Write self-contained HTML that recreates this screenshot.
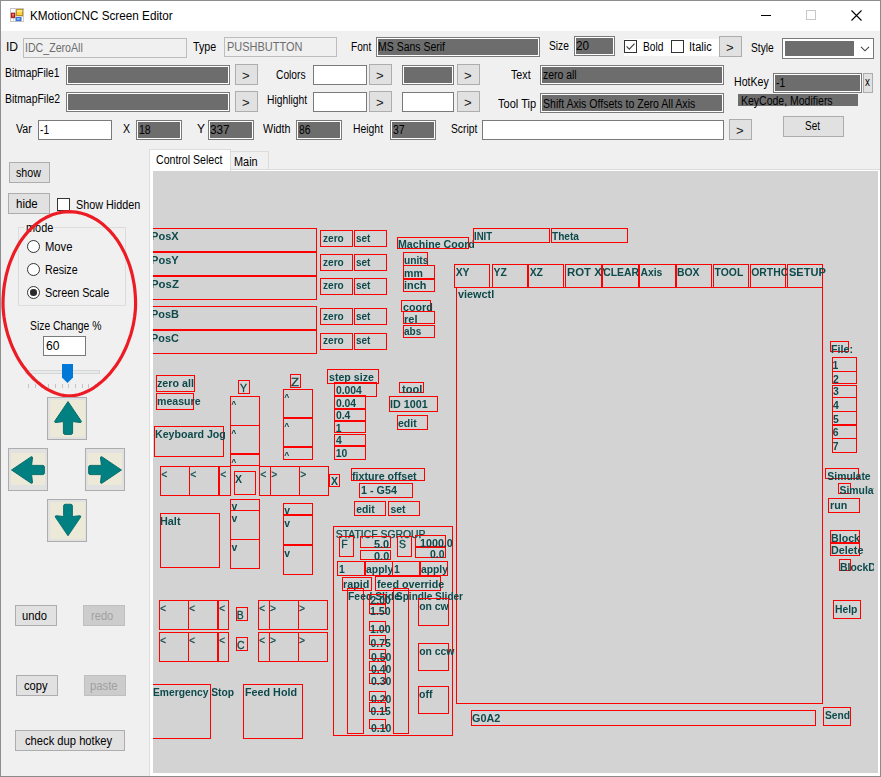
<!DOCTYPE html>
<html><head><meta charset="utf-8"><title>KMotionCNC Screen Editor</title>
<style>
html,body{margin:0;padding:0;background:#f0f0f0;}
body{width:881px;height:777px;overflow:hidden;position:relative;font-family:"Liberation Sans",sans-serif;}
#win{position:absolute;left:0;top:0;width:881px;height:777px;background:#f0f0f0;overflow:hidden;}
#win div,#win span,#win svg{position:absolute;box-sizing:border-box;}
.t{white-space:nowrap;line-height:14px;transform-origin:0 50%;display:block;}
.cl{overflow:hidden;}
.tb{border:1px solid #7a7a7a;background:#fff;}
.tbd{border:1px solid #7a7a7a;background:#fff;}
.tbd>i{position:absolute;left:1px;top:1px;right:1px;bottom:1px;background:#6d6d6d;display:block;}
.tbg{border:1px solid #bdbdbd;background:#f0f0f0;}
.btn{border:1px solid #adadad;background:#e1e1e1;}
.btnd{border:1px solid #bfbfbf;background:#cccccc;}
.cb{border:1px solid #333;background:#fff;}
.r{border:1px solid #ff0000;}

</style></head><body>
<div id="win">
<div style="left:0;top:0;width:881px;height:31px;background:#fff;"></div>
<svg style="left:10px;top:8px" width="14" height="14" viewBox="10 8 14 14">
<rect x="10" y="8" width="14" height="14" fill="#c6c6c6"/>
<rect x="11" y="9" width="4.3" height="3.2" fill="#fff"/>
<rect x="11" y="18.6" width="2.2" height="2.4" fill="#fff"/>
<rect x="13.9" y="18.6" width="1.4" height="2.4" fill="#fff"/>
<rect x="21.9" y="16.9" width="1.3" height="4.1" fill="#fff"/>
<rect x="15.3" y="16.3" width="6.4" height="0.8" fill="#e8e8e8"/>
<rect x="16.2" y="9" width="6.9" height="6.9" fill="#b8870c"/>
<rect x="17.1" y="9.9" width="5.1" height="5.1" fill="#ffd23c"/>
<rect x="17.1" y="9.9" width="5.1" height="2.2" fill="#ffe88c"/>
<rect x="10.9" y="12.9" width="4.2" height="5" fill="#a81808"/>
<rect x="11.9" y="13.6" width="2.2" height="3.2" fill="#e0503c"/>
<rect x="12.5" y="14" width="1" height="1.4" fill="#f8b0a0"/>
<rect x="15.7" y="17" width="5.5" height="4.1" fill="#2f62c8"/>
<rect x="16.3" y="17.6" width="4.3" height="2.9" fill="#4f8cf0"/>
<rect x="17" y="18.1" width="2.6" height="1.4" fill="#9cc0fa"/>
</svg>
<span class="t" style="left:29.56px;top:9.00px;font-size:12.2px;transform:scaleX(0.9622);">KMotionCNC Screen Editor</span>
<svg style="left:750px;top:1px" width="130" height="30" viewBox="0 0 130 30">
<path d="M11 14.5h10" stroke="#000" stroke-width="1" fill="none"/>
<rect x="56.5" y="9.5" width="9" height="9" fill="none" stroke="#c8c8c8" stroke-width="1"/>
<path d="M101.5 9.5l10 10M111.5 9.5l-10 10" stroke="#000" stroke-width="1.1" fill="none"/>
</svg>
<span class="t" style="left:5.91px;top:40.00px;font-size:12.5px;transform:scaleX(0.9711);">ID</span>
<div class="tbg" style="left:23px;top:38px;width:164px;height:20px;"></div>
<span class="t" style="left:25.24px;top:41.00px;font-size:12.5px;color:#6d6d6d;transform:scaleX(0.8491);">IDC_ZeroAll</span>
<span class="t" style="left:193.29px;top:40.00px;font-size:12.5px;transform:scaleX(0.8551);">Type</span>
<div class="tbg" style="left:224px;top:37px;width:113px;height:20px;"></div>
<span class="t" style="left:226.62px;top:40.00px;font-size:12.5px;color:#6d6d6d;transform:scaleX(0.8780);">PUSHBUTTON</span>
<span class="t" style="left:350.79px;top:40.00px;font-size:12.5px;transform:scaleX(0.8083);">Font</span>
<div class="tbd" style="left:376px;top:37px;width:164px;height:20px"><i></i></div>
<span class="t" style="left:378.46px;top:40.00px;font-size:12.5px;transform:scaleX(0.8386);">MS Sans Serif</span>
<span class="t" style="left:548.54px;top:39.00px;font-size:12.5px;transform:scaleX(0.8172);">Size</span>
<div class="tbd" style="left:574px;top:36px;width:41px;height:20px"><i></i></div>
<span class="t" style="left:576.41px;top:39.00px;font-size:12.5px;transform:scaleX(0.9366);">20</span>
<div class="" style="left:624px;top:39px;width:95px;height:17px;background:#fff;"></div>
<div class="cb" style="left:624px;top:40px;width:13px;height:13px;"></div>
<svg style="left:624px;top:40px" width="13" height="13" viewBox="0 0 13 13"><path d="M2.6 6.4l2.7 2.8l5.2-5.6" fill="none" stroke="#3c3c3c" stroke-width="1.1"/></svg>
<span class="t" style="left:642.68px;top:40.00px;font-size:12.5px;transform:scaleX(0.8172);">Bold</span>
<div class="cb" style="left:671px;top:40px;width:13px;height:13px;"></div>
<span class="t" style="left:689.01px;top:40.00px;font-size:12.5px;transform:scaleX(0.8825);">Italic</span>
<div class="btn" style="left:719px;top:36px;width:23px;height:21px;"></div>
<span class="t" style="left:726.11px;top:41.00px;font-size:12.5px;color:#1a1a1a;transform:scaleX(1.0505);">&gt;</span>
<span class="t" style="left:751.14px;top:41.00px;font-size:12.5px;transform:scaleX(0.8169);">Style</span>
<div class="tb" style="left:782px;top:38px;width:92px;height:21px;border-color:#7a7a7a;"></div>
<div class="" style="left:785px;top:41px;width:69px;height:15px;background:#6d6d6d;"></div>
<svg style="left:858px;top:44px" width="12" height="8" viewBox="0 0 12 8"><path d="M3 2.8l4 4l4-4" fill="none" stroke="#444" stroke-width="1.1"/></svg>
<span class="t" style="left:5.37px;top:66.00px;font-size:12.5px;transform:scaleX(0.8256);">BitmapFile1</span>
<div class="tbd" style="left:66px;top:65px;width:164px;height:20px"><i></i></div>
<div class="btn" style="left:235px;top:64px;width:23px;height:21px;"></div>
<span class="t" style="left:242.11px;top:69.00px;font-size:12.5px;color:#1a1a1a;transform:scaleX(1.0505);">&gt;</span>
<span class="t" style="left:276.19px;top:68.00px;font-size:12.5px;transform:scaleX(0.8185);">Colors</span>
<div class="tb" style="left:313px;top:65px;width:54px;height:20px;"></div>
<div class="btn" style="left:369px;top:64px;width:23px;height:21px;"></div>
<span class="t" style="left:376.11px;top:69.00px;font-size:12.5px;color:#1a1a1a;transform:scaleX(1.0505);">&gt;</span>
<div class="tbd" style="left:402px;top:65px;width:52px;height:20px"><i></i></div>
<div class="btn" style="left:457px;top:64px;width:23px;height:21px;"></div>
<span class="t" style="left:464.11px;top:69.00px;font-size:12.5px;color:#1a1a1a;transform:scaleX(1.0505);">&gt;</span>
<span class="t" style="left:511.49px;top:68.00px;font-size:12.5px;transform:scaleX(0.8575);">Text</span>
<div class="tbd" style="left:540px;top:65px;width:184px;height:20px"><i></i></div>
<span class="t" style="left:542.58px;top:68.00px;font-size:12.5px;transform:scaleX(0.8359);">zero all</span>
<span class="t" style="left:733.65px;top:75.00px;font-size:12.5px;transform:scaleX(0.8475);">HotKey</span>
<div class="tbd" style="left:773px;top:73px;width:89px;height:20px"><i></i></div>
<span class="t" style="left:775.59px;top:76.00px;font-size:12.5px;transform:scaleX(0.8149);">-1</span>
<div class="btn" style="left:863px;top:73px;width:10px;height:20px;"></div>
<span class="t" style="left:864.70px;top:75.00px;font-size:12.5px;transform:scaleX(0.7833);">x</span>
<div class="" style="left:738px;top:94px;width:120px;height:12px;background:#6d6d6d;"></div>
<span class="t" style="left:740.66px;top:94.00px;font-size:12.5px;transform:scaleX(0.8400);">KeyCode, Modifiers</span>
<span class="t" style="left:5.37px;top:92.00px;font-size:12.5px;transform:scaleX(0.8349);">BitmapFile2</span>
<div class="tbd" style="left:66px;top:92px;width:164px;height:20px"><i></i></div>
<div class="btn" style="left:235px;top:91px;width:23px;height:21px;"></div>
<span class="t" style="left:242.11px;top:96.00px;font-size:12.5px;color:#1a1a1a;transform:scaleX(1.0505);">&gt;</span>
<span class="t" style="left:266.58px;top:93.00px;font-size:12.5px;transform:scaleX(0.8231);">Highlight</span>
<div class="tb" style="left:313px;top:92px;width:54px;height:20px;"></div>
<div class="btn" style="left:369px;top:91px;width:23px;height:21px;"></div>
<span class="t" style="left:376.11px;top:96.00px;font-size:12.5px;color:#1a1a1a;transform:scaleX(1.0505);">&gt;</span>
<div class="tb" style="left:402px;top:92px;width:52px;height:20px;"></div>
<div class="btn" style="left:457px;top:91px;width:23px;height:21px;"></div>
<span class="t" style="left:464.11px;top:96.00px;font-size:12.5px;color:#1a1a1a;transform:scaleX(1.0505);">&gt;</span>
<span class="t" style="left:497.78px;top:97.00px;font-size:12.5px;transform:scaleX(0.8839);">Tool Tip</span>
<div class="tbd" style="left:540px;top:93px;width:184px;height:20px"><i></i></div>
<span class="t" style="left:542.53px;top:97.00px;font-size:12.5px;transform:scaleX(0.8440);">Shift Axis Offsets to Zero All Axis</span>
<span class="t" style="left:15.50px;top:122.00px;font-size:12.5px;transform:scaleX(0.8544);">Var</span>
<div class="tb" style="left:38px;top:120px;width:74px;height:20px;"></div>
<span class="t" style="left:40.09px;top:123.00px;font-size:12.5px;transform:scaleX(0.8149);">-1</span>
<span class="t" style="left:123.39px;top:122.00px;font-size:12.5px;transform:scaleX(0.8508);">X</span>
<div class="tbd" style="left:136px;top:120px;width:46px;height:20px"><i></i></div>
<span class="t" style="left:139.21px;top:123.00px;font-size:12.5px;transform:scaleX(0.8442);">18</span>
<span class="t" style="left:196.96px;top:122.00px;font-size:12.5px;transform:scaleX(0.9600);">Y</span>
<div class="tbd" style="left:208px;top:120px;width:46px;height:20px"><i></i></div>
<span class="t" style="left:210.09px;top:123.00px;font-size:12.5px;transform:scaleX(0.9438);">337</span>
<span class="t" style="left:263.20px;top:122.00px;font-size:12.5px;transform:scaleX(0.8593);">Width</span>
<div class="tbd" style="left:296px;top:120px;width:46px;height:20px"><i></i></div>
<span class="t" style="left:298.99px;top:123.00px;font-size:12.5px;transform:scaleX(0.8233);">86</span>
<span class="t" style="left:353.47px;top:122.00px;font-size:12.5px;transform:scaleX(0.8313);">Height</span>
<div class="tbd" style="left:390px;top:120px;width:46px;height:20px"><i></i></div>
<span class="t" style="left:393.13px;top:123.00px;font-size:12.5px;transform:scaleX(0.8388);">37</span>
<span class="t" style="left:450.74px;top:122.00px;font-size:12.5px;transform:scaleX(0.8223);">Script</span>
<div class="tb" style="left:482px;top:120px;width:242px;height:20px;"></div>
<div class="btn" style="left:729px;top:119px;width:23px;height:21px;"></div>
<span class="t" style="left:736.11px;top:124.00px;font-size:12.5px;color:#1a1a1a;transform:scaleX(1.0505);">&gt;</span>
<div class="btn" style="left:783px;top:116px;width:61px;height:21px;"></div>
<span class="t" style="left:805.05px;top:119.00px;font-size:12.5px;transform:scaleX(0.7973);">Set</span>
<div class="btn" style="left:9px;top:162px;width:41px;height:21px;"></div>
<span class="t" style="left:15.73px;top:166.00px;font-size:12.5px;transform:scaleX(0.8519);">show</span>
<div class="btn" style="left:8px;top:193px;width:42px;height:21px;"></div>
<span class="t" style="left:16.05px;top:197.00px;font-size:12.5px;transform:scaleX(0.9188);">hide</span>
<div class="cb" style="left:57px;top:198px;width:13px;height:13px;"></div>
<span class="t" style="left:75.71px;top:198.00px;font-size:12.5px;transform:scaleX(0.8630);">Show Hidden</span>
<div class="" style="left:18px;top:227px;width:108px;height:79px;border:1px solid #dcdcdc;"></div>
<div class="" style="left:24px;top:221px;width:30px;height:14px;background:#f0f0f0;"></div>
<span class="t" style="left:25.69px;top:221.00px;font-size:12.5px;transform:scaleX(0.8718);">mode</span>
<div style="left:27px;top:240.0px;width:13px;height:13px;border:1px solid #333;border-radius:50%;background:#fff;"></div>
<span class="t" style="left:45.00px;top:240.00px;font-size:12.5px;transform:scaleX(0.8981);">Move</span>
<div style="left:27px;top:263.0px;width:13px;height:13px;border:1px solid #333;border-radius:50%;background:#fff;"></div>
<span class="t" style="left:45.05px;top:263.00px;font-size:12.5px;transform:scaleX(0.8532);">Resize</span>
<div style="left:27px;top:286.0px;width:13px;height:13px;border:1px solid #333;border-radius:50%;background:#fff;"></div>
<span class="t" style="left:45.41px;top:286.00px;font-size:12.5px;transform:scaleX(0.8628);">Screen Scale</span>
<div style="left:30.2px;top:289.2px;width:6.6px;height:6.6px;border-radius:50%;background:#2a2a2a;"></div>
<span class="t" style="left:29.83px;top:319.00px;font-size:12.5px;transform:scaleX(0.8288);">Size Change %</span>
<div class="tb" style="left:43px;top:336px;width:43px;height:20px;"></div>
<span class="t" style="left:45.70px;top:339.00px;font-size:12.5px;transform:scaleX(0.9678);">60</span>
<div class="" style="left:25px;top:370px;width:75px;height:4px;background:#e7eaea;border:1px solid #d6d6d6;"></div>
<svg style="left:62px;top:364px" width="11" height="20" viewBox="0 0 11 20"><path d="M0 0h11v13.5l-5.5 5.5l-5.5-5.5z" fill="#0078d7"/></svg>
<div class="" style="left:28px;top:384px;width:1px;height:4px;background:#c4c4c4;"></div>
<div class="" style="left:35px;top:384px;width:1px;height:4px;background:#c4c4c4;"></div>
<div class="" style="left:41px;top:384px;width:1px;height:4px;background:#c4c4c4;"></div>
<div class="" style="left:48px;top:384px;width:1px;height:4px;background:#c4c4c4;"></div>
<div class="" style="left:55px;top:384px;width:1px;height:4px;background:#c4c4c4;"></div>
<div class="" style="left:62px;top:384px;width:1px;height:4px;background:#c4c4c4;"></div>
<div class="" style="left:68px;top:384px;width:1px;height:4px;background:#c4c4c4;"></div>
<div class="" style="left:75px;top:384px;width:1px;height:4px;background:#c4c4c4;"></div>
<div class="" style="left:82px;top:384px;width:1px;height:4px;background:#c4c4c4;"></div>
<div class="" style="left:88px;top:384px;width:1px;height:4px;background:#c4c4c4;"></div>
<div class="" style="left:95px;top:384px;width:1px;height:4px;background:#c4c4c4;"></div>
<svg style="left:0;top:205px" width="140" height="195" viewBox="0 205 140 195"><path d="M135.6 303.8 L135.5 307.6 L135.2 311.8 L134.7 316.2 L134.0 320.7 L133.2 325.2 L132.1 329.7 L130.9 334.2 L129.4 338.6 L127.8 343.0 L126.1 347.3 L124.1 351.5 L122.0 355.7 L119.8 359.6 L117.4 363.5 L114.9 367.1 L112.2 370.6 L109.5 373.9 L106.6 377.0 L103.7 379.9 L100.6 382.6 L97.5 385.1 L94.4 387.3 L91.2 389.3 L87.9 391.0 L84.7 392.5 L81.4 393.7 L78.2 394.7 L75.1 395.4 L72.0 395.8 L69.3 395.9 L66.6 395.8 L63.5 395.4 L60.4 394.7 L57.2 393.7 L53.9 392.5 L50.7 391.0 L47.4 389.3 L44.2 387.3 L41.1 385.1 L38.0 382.6 L34.9 379.9 L32.0 377.0 L29.1 373.9 L26.4 370.6 L23.7 367.1 L21.2 363.5 L18.8 359.6 L16.6 355.7 L14.5 351.5 L12.5 347.3 L10.8 343.0 L9.2 338.6 L7.7 334.2 L6.5 329.7 L5.4 325.2 L4.6 320.7 L3.9 316.2 L3.4 311.8 L3.1 307.6 L3.0 303.8 L3.1 299.0 L3.4 294.2 L3.8 289.4 L4.4 284.7 L5.3 280.0 L6.2 275.3 L7.4 270.8 L8.7 266.3 L10.2 262.0 L11.9 257.8 L13.7 253.6 L15.7 249.7 L17.8 245.8 L20.0 242.2 L22.4 238.7 L24.9 235.4 L27.6 232.2 L30.3 229.3 L33.2 226.6 L36.1 224.0 L39.2 221.7 L42.3 219.7 L45.5 217.8 L48.8 216.2 L52.1 214.8 L55.5 213.7 L58.9 212.8 L62.4 212.2 L65.8 211.8 L69.3 211.7 L72.8 211.8 L76.2 212.2 L79.7 212.8 L83.1 213.7 L86.5 214.8 L89.8 216.2 L93.1 217.8 L96.3 219.7 L99.4 221.7 L102.5 224.0 L105.4 226.6 L108.3 229.3 L111.0 232.2 L113.7 235.4 L116.2 238.7 L118.6 242.2 L120.8 245.8 L122.9 249.7 L124.9 253.6 L126.7 257.8 L128.4 262.0 L129.9 266.3 L131.2 270.8 L132.4 275.3 L133.3 280.0 L134.2 284.7 L134.8 289.4 L135.2 294.2 L135.5 299.0 L135.6 303.8Z" fill="none" stroke="#ed1c24" stroke-width="3.2" stroke-linejoin="round"/></svg>
<div class="btn" style="left:47px;top:397px;width:40px;height:43px;"></div>
<div style="left:50px;top:399.5px;width:34.5px;height:37.0px;background:#ece9d8;"></div>
<svg style="left:49.5px;top:399.8px" width="36" height="36" viewBox="-18 -18 36 36"><g transform="rotate(0) scale(1.0)">
<path d="M0 -16.5 L13.3 3.2 Q13.6 4.6 12 4.5 L4.6 3.6 L4.6 15 Q4.4 16.3 3 16.4 L-3 16.4 Q-4.4 16.3 -4.6 15 L-4.6 3.6 L-12 4.5 Q-13.6 4.6 -13.3 3.2 Z" fill="#008080" stroke="#006868" stroke-width="0.9" stroke-linejoin="round"/>
</g></svg>
<div class="btn" style="left:8px;top:448px;width:40px;height:43px;"></div>
<div style="left:10.7px;top:453px;width:34.599999999999994px;height:32px;background:#ece9d8;"></div>
<svg style="left:10px;top:451.9px" width="36" height="36" viewBox="-18 -18 36 36"><g transform="rotate(270) scale(1.0)">
<path d="M0 -16.5 L13.3 3.2 Q13.6 4.6 12 4.5 L4.6 3.6 L4.6 15 Q4.4 16.3 3 16.4 L-3 16.4 Q-4.4 16.3 -4.6 15 L-4.6 3.6 L-12 4.5 Q-13.6 4.6 -13.3 3.2 Z" fill="#008080" stroke="#006868" stroke-width="0.9" stroke-linejoin="round"/>
</g></svg>
<div class="btn" style="left:85px;top:448px;width:40px;height:43px;"></div>
<div style="left:87.9px;top:453px;width:34.599999999999994px;height:32px;background:#ece9d8;"></div>
<svg style="left:87px;top:451.9px" width="36" height="36" viewBox="-18 -18 36 36"><g transform="rotate(90) scale(1.0)">
<path d="M0 -16.5 L13.3 3.2 Q13.6 4.6 12 4.5 L4.6 3.6 L4.6 15 Q4.4 16.3 3 16.4 L-3 16.4 Q-4.4 16.3 -4.6 15 L-4.6 3.6 L-12 4.5 Q-13.6 4.6 -13.3 3.2 Z" fill="#008080" stroke="#006868" stroke-width="0.9" stroke-linejoin="round"/>
</g></svg>
<div class="btn" style="left:47px;top:499px;width:40px;height:43px;"></div>
<div style="left:50px;top:502px;width:34.5px;height:37px;background:#ece9d8;"></div>
<svg style="left:49.5px;top:502px" width="36" height="36" viewBox="-18 -18 36 36"><g transform="rotate(180) scale(0.96)">
<path d="M0 -16.5 L13.3 3.2 Q13.6 4.6 12 4.5 L4.6 3.6 L4.6 15 Q4.4 16.3 3 16.4 L-3 16.4 Q-4.4 16.3 -4.6 15 L-4.6 3.6 L-12 4.5 Q-13.6 4.6 -13.3 3.2 Z" fill="#008080" stroke="#006868" stroke-width="0.9" stroke-linejoin="round"/>
</g></svg>
<div class="btn" style="left:15px;top:605px;width:42px;height:21px;"></div>
<span class="t" style="left:21.73px;top:609.00px;font-size:12.5px;transform:scaleX(0.8960);">undo</span>
<div class="btnd" style="left:83px;top:605px;width:42px;height:21px;"></div>
<span class="t" style="left:91.48px;top:609.00px;font-size:12.5px;color:#a0a0a0;transform:scaleX(0.8908);">redo</span>
<div class="btn" style="left:16px;top:675px;width:42px;height:21px;"></div>
<span class="t" style="left:24.15px;top:679.00px;font-size:12.5px;transform:scaleX(0.8928);">copy</span>
<div class="btnd" style="left:84px;top:675px;width:42px;height:21px;"></div>
<span class="t" style="left:89.62px;top:679.00px;font-size:12.5px;color:#a0a0a0;transform:scaleX(0.9041);">paste</span>
<div class="btn" style="left:15px;top:730px;width:110px;height:21px;"></div>
<span class="t" style="left:24.85px;top:734.00px;font-size:12.5px;transform:scaleX(0.8955);">check dup hotkey</span>
<div class="" style="left:149px;top:169px;width:732px;height:608px;background:#fff;border-left:1px solid #dcdcdc;border-top:1px solid #dcdcdc;"></div>
<div class="" style="left:149px;top:149px;width:82px;height:23px;background:#fff;border:1px solid #dcdcdc;border-bottom:none;"></div>
<div class="" style="left:230px;top:151px;width:39px;height:19px;background:#f0f0f0;border:1px solid #dcdcdc;"></div>
<span class="t" style="left:155.97px;top:153.00px;font-size:12.5px;transform:scaleX(0.8462);">Control Select</span>
<span class="t" style="left:234.23px;top:155.00px;font-size:12.5px;transform:scaleX(0.8731);">Main</span>
<div style="left:153px;top:171px;width:725px;height:602px;background:#d3d3d3;"></div>
<div id="cv" style="left:153px;top:171px;width:725px;height:602px;overflow:hidden;will-change:transform;">
<div class="r" style="left:-13px;top:57px;width:177px;height:24px"></div>
<span class="t" style="left:-2.42px;top:59.40px;font-size:10.4px;color:#0d4a4c;font-weight:700;transform:scaleX(1.0644);">PosX</span>
<div class="r" style="left:-13px;top:81px;width:177px;height:24px"></div>
<span class="t" style="left:-2.42px;top:83.40px;font-size:10.4px;color:#0d4a4c;font-weight:700;transform:scaleX(1.0666);">PosY</span>
<div class="r" style="left:-13px;top:105px;width:177px;height:24px"></div>
<span class="t" style="left:-2.44px;top:107.40px;font-size:10.4px;color:#0d4a4c;font-weight:700;transform:scaleX(1.0983);">PosZ</span>
<div class="r" style="left:-13px;top:135px;width:177px;height:24px"></div>
<span class="t" style="left:-2.41px;top:137.40px;font-size:10.4px;color:#0d4a4c;font-weight:700;transform:scaleX(1.0557);">PosB</span>
<div class="r" style="left:-13px;top:159px;width:177px;height:24px"></div>
<span class="t" style="left:-2.41px;top:161.40px;font-size:10.4px;color:#0d4a4c;font-weight:700;transform:scaleX(1.0493);">PosC</span>
<div class="r" style="left:167px;top:59px;width:33px;height:17px"></div>
<span class="t" style="left:169.60px;top:61.10px;font-size:10.4px;color:#0d4a4c;font-weight:700;transform:scaleX(0.9713);">zero</span>
<div class="r" style="left:201px;top:59px;width:33px;height:17px"></div>
<span class="t" style="left:203.40px;top:61.10px;font-size:10.4px;color:#0d4a4c;font-weight:700;transform:scaleX(0.9615);">set</span>
<div class="r" style="left:167px;top:83px;width:33px;height:17px"></div>
<span class="t" style="left:169.60px;top:85.10px;font-size:10.4px;color:#0d4a4c;font-weight:700;transform:scaleX(0.9713);">zero</span>
<div class="r" style="left:201px;top:83px;width:33px;height:17px"></div>
<span class="t" style="left:203.40px;top:85.10px;font-size:10.4px;color:#0d4a4c;font-weight:700;transform:scaleX(0.9615);">set</span>
<div class="r" style="left:167px;top:107px;width:33px;height:17px"></div>
<span class="t" style="left:169.60px;top:108.20px;font-size:10.4px;color:#0d4a4c;font-weight:700;transform:scaleX(0.9713);">zero</span>
<div class="r" style="left:201px;top:107px;width:33px;height:17px"></div>
<span class="t" style="left:203.40px;top:108.20px;font-size:10.4px;color:#0d4a4c;font-weight:700;transform:scaleX(0.9615);">set</span>
<div class="r" style="left:167px;top:137px;width:33px;height:17px"></div>
<span class="t" style="left:169.60px;top:139.00px;font-size:10.4px;color:#0d4a4c;font-weight:700;transform:scaleX(0.9713);">zero</span>
<div class="r" style="left:201px;top:137px;width:33px;height:17px"></div>
<span class="t" style="left:203.40px;top:139.00px;font-size:10.4px;color:#0d4a4c;font-weight:700;transform:scaleX(0.9615);">set</span>
<div class="r" style="left:167px;top:162px;width:33px;height:17px"></div>
<span class="t" style="left:169.60px;top:163.20px;font-size:10.4px;color:#0d4a4c;font-weight:700;transform:scaleX(0.9713);">zero</span>
<div class="r" style="left:201px;top:162px;width:33px;height:17px"></div>
<span class="t" style="left:203.40px;top:163.20px;font-size:10.4px;color:#0d4a4c;font-weight:700;transform:scaleX(0.9615);">set</span>
<div class="r" style="left:244px;top:66px;width:72px;height:12px"></div>
<span class="t" style="left:245.06px;top:67.40px;font-size:10.4px;color:#0d4a4c;font-weight:700;transform:scaleX(1.0239);">Machine Coord</span>
<div class="r" style="left:250px;top:81px;width:25px;height:14px"></div>
<span class="t" style="left:250.89px;top:83.00px;font-size:10.4px;color:#0d4a4c;font-weight:700;transform:scaleX(0.9846);">units</span>
<div class="r" style="left:250px;top:94px;width:32px;height:14px"></div>
<span class="t" style="left:250.81px;top:96.40px;font-size:10.4px;color:#0d4a4c;font-weight:700;transform:scaleX(1.0167);">mm</span>
<div class="r" style="left:250px;top:108px;width:32px;height:13px"></div>
<span class="t" style="left:250.79px;top:108.00px;font-size:10.4px;color:#0d4a4c;font-weight:700;transform:scaleX(1.0462);">inch</span>
<div class="r" style="left:248px;top:129px;width:30px;height:12px"></div>
<span class="t" style="left:250.37px;top:129.90px;font-size:10.4px;color:#0d4a4c;font-weight:700;transform:scaleX(1.0334);">coord</span>
<div class="r" style="left:250px;top:140px;width:32px;height:13px"></div>
<span class="t" style="left:250.78px;top:142.40px;font-size:10.4px;color:#0d4a4c;font-weight:700;transform:scaleX(1.0586);">rel</span>
<div class="r" style="left:250px;top:154px;width:32px;height:13px"></div>
<span class="t" style="left:251.25px;top:154.40px;font-size:10.4px;color:#0d4a4c;font-weight:700;transform:scaleX(0.9702);">abs</span>
<div class="r" style="left:320px;top:57px;width:77px;height:15px"></div>
<span class="t" style="left:321.38px;top:59.40px;font-size:10.4px;color:#0d4a4c;font-weight:700;transform:scaleX(0.9246);">INIT</span>
<div class="r" style="left:398px;top:57px;width:77px;height:15px"></div>
<span class="t" style="left:399.40px;top:59.40px;font-size:10.4px;color:#0d4a4c;font-weight:700;transform:scaleX(0.9742);">Theta</span>
<div class="r" style="left:301px;top:93px;width:36px;height:24px"></div>
<span class="t" style="left:302.65px;top:95.10px;font-size:10.4px;color:#0d4a4c;font-weight:700;">XY</span>
<div class="r" style="left:339px;top:93px;width:36px;height:24px"></div>
<span class="t" style="left:340.54px;top:95.10px;font-size:10.4px;color:#0d4a4c;font-weight:700;">YZ</span>
<div class="r" style="left:375px;top:93px;width:36px;height:24px"></div>
<span class="t" style="left:376.65px;top:95.10px;font-size:10.4px;color:#0d4a4c;font-weight:700;">XZ</span>
<div class="r" style="left:412px;top:93px;width:37px;height:24px"></div>
<div class="cl" style="left:412px;top:95.10px;width:39.5px;height:14px"><span class="t" style="left:1.56px;top:0;font-size:10.4px;color:#0d4a4c;font-weight:700;transform:scaleX(1.0974);">ROT XY</span></div>
<div class="r" style="left:449px;top:93px;width:37px;height:24px"></div>
<div class="cl" style="left:449px;top:95.10px;width:39px;height:14px"><span class="t" style="left:1.28px;top:0;font-size:10.4px;color:#0d4a4c;font-weight:700;">CLEAR</span></div>
<div class="r" style="left:486px;top:93px;width:37px;height:24px"></div>
<span class="t" style="left:487.44px;top:95.10px;font-size:10.4px;color:#0d4a4c;font-weight:700;">Axis</span>
<div class="r" style="left:523px;top:93px;width:36px;height:24px"></div>
<span class="t" style="left:524.02px;top:95.10px;font-size:10.4px;color:#0d4a4c;font-weight:700;">BOX</span>
<div class="r" style="left:560px;top:93px;width:36px;height:24px"></div>
<span class="t" style="left:561.60px;top:95.10px;font-size:10.4px;color:#0d4a4c;font-weight:700;">TOOL</span>
<div class="r" style="left:597px;top:93px;width:36px;height:24px"></div>
<div class="cl" style="left:597px;top:95.10px;width:38px;height:14px"><span class="t" style="left:1.28px;top:0;font-size:10.4px;color:#0d4a4c;font-weight:700;">ORTHO</span></div>
<div class="r" style="left:634px;top:93px;width:36px;height:24px"></div>
<span class="t" style="left:635.72px;top:95.10px;font-size:10.4px;color:#0d4a4c;font-weight:700;transform:scaleX(1.0628);">SETUP</span>
<div class="r" style="left:303px;top:116px;width:367px;height:417px"></div>
<span class="t" style="left:304.50px;top:117.40px;font-size:10.4px;color:#0d4a4c;font-weight:700;transform:scaleX(1.0455);">viewctl</span>
<div class="r" style="left:3px;top:204px;width:39px;height:17px"></div>
<span class="t" style="left:4.37px;top:206.00px;font-size:10.4px;color:#0d4a4c;font-weight:700;transform:scaleX(1.0306);">zero all</span>
<div class="r" style="left:3px;top:222px;width:38px;height:17px"></div>
<span class="t" style="left:4.11px;top:224.20px;font-size:10.4px;color:#0d4a4c;font-weight:700;transform:scaleX(1.0189);">measure</span>
<div class="r" style="left:1px;top:255px;width:70px;height:31px"></div>
<span class="t" style="left:1.81px;top:257.40px;font-size:10.4px;color:#0d4a4c;font-weight:700;transform:scaleX(1.0226);">Keyboard Jog</span>
<div class="r" style="left:85px;top:209px;width:12px;height:14px"></div>
<span class="t" style="left:86.69px;top:211.15px;font-size:10.4px;color:#0d4a4c;-webkit-text-stroke:0.3px #0d4a4c;transform:scaleX(1.0154);">Y</span>
<div class="r" style="left:137px;top:203px;width:11px;height:14px"></div>
<span class="t" style="left:137.61px;top:204.90px;font-size:10.4px;color:#0d4a4c;-webkit-text-stroke:0.3px #0d4a4c;transform:scaleX(1.2587);">Z</span>
<div class="r" style="left:77px;top:225px;width:30px;height:30px"></div>
<span class="t" style="left:78.23px;top:225.72px;font-size:8.6px;color:#0d4a4c;font-weight:700;">^</span>
<div class="r" style="left:77px;top:254px;width:30px;height:29px"></div>
<span class="t" style="left:78.23px;top:254.72px;font-size:8.6px;color:#0d4a4c;font-weight:700;">^</span>
<div class="r" style="left:77px;top:283px;width:30px;height:12px"></div>
<span class="t" style="left:78.23px;top:283.72px;font-size:8.6px;color:#0d4a4c;font-weight:700;">^</span>
<div class="r" style="left:130px;top:218px;width:30px;height:29px"></div>
<span class="t" style="left:131.23px;top:218.72px;font-size:8.6px;color:#0d4a4c;font-weight:700;">^</span>
<div class="r" style="left:130px;top:247px;width:30px;height:29px"></div>
<span class="t" style="left:131.23px;top:247.72px;font-size:8.6px;color:#0d4a4c;font-weight:700;">^</span>
<div class="r" style="left:130px;top:276px;width:30px;height:13px"></div>
<span class="t" style="left:131.23px;top:276.72px;font-size:8.6px;color:#0d4a4c;font-weight:700;">^</span>
<div class="r" style="left:174px;top:198px;width:52px;height:15px"></div>
<span class="t" style="left:176.13px;top:199.90px;font-size:10.4px;color:#0d4a4c;font-weight:700;transform:scaleX(1.0228);">step size</span>
<div class="r" style="left:181px;top:211px;width:43px;height:15px"></div>
<span class="t" style="left:182.89px;top:213.00px;font-size:10.4px;color:#0d4a4c;font-weight:700;transform:scaleX(0.9947);">0.004</span>
<div class="r" style="left:181px;top:224px;width:32px;height:14px"></div>
<span class="t" style="left:182.89px;top:226.30px;font-size:10.4px;color:#0d4a4c;font-weight:700;">0.04</span>
<div class="r" style="left:181px;top:238px;width:32px;height:12px"></div>
<span class="t" style="left:182.89px;top:237.70px;font-size:10.4px;color:#0d4a4c;font-weight:700;">0.4</span>
<div class="r" style="left:181px;top:250px;width:32px;height:12px"></div>
<span class="t" style="left:182.63px;top:251.30px;font-size:10.4px;color:#0d4a4c;font-weight:700;">1</span>
<div class="r" style="left:181px;top:263px;width:32px;height:12px"></div>
<span class="t" style="left:183.09px;top:262.60px;font-size:10.4px;color:#0d4a4c;font-weight:700;">4</span>
<div class="r" style="left:181px;top:275px;width:32px;height:14px"></div>
<span class="t" style="left:182.63px;top:276.00px;font-size:10.4px;color:#0d4a4c;font-weight:700;">10</span>
<div class="r" style="left:246px;top:211px;width:25px;height:11px"></div>
<span class="t" style="left:248.64px;top:212.40px;font-size:10.4px;color:#0d4a4c;font-weight:700;transform:scaleX(1.0684);">tool</span>
<div class="r" style="left:236px;top:225px;width:49px;height:16px"></div>
<span class="t" style="left:237.05px;top:227.40px;font-size:10.4px;color:#0d4a4c;font-weight:700;transform:scaleX(1.0363);">ID 1001</span>
<div class="r" style="left:244px;top:244px;width:31px;height:15px"></div>
<span class="t" style="left:245.38px;top:246.15px;font-size:10.4px;color:#0d4a4c;font-weight:700;transform:scaleX(1.0114);">edit</span>
<div class="r" style="left:7px;top:295px;width:30px;height:30px"></div>
<span class="t" style="left:8.23px;top:297.40px;font-size:10.4px;color:#0d4a4c;-webkit-text-stroke:0.2px #0d4a4c;">&lt;</span>
<div class="r" style="left:36px;top:295px;width:30px;height:30px"></div>
<span class="t" style="left:37.23px;top:297.40px;font-size:10.4px;color:#0d4a4c;-webkit-text-stroke:0.2px #0d4a4c;">&lt;</span>
<div class="r" style="left:66px;top:295px;width:12px;height:30px"></div>
<span class="t" style="left:67.23px;top:297.40px;font-size:10.4px;color:#0d4a4c;-webkit-text-stroke:0.2px #0d4a4c;">&lt;</span>
<div class="r" style="left:106px;top:295px;width:12px;height:30px"></div>
<span class="t" style="left:107.23px;top:297.40px;font-size:10.4px;color:#0d4a4c;-webkit-text-stroke:0.2px #0d4a4c;">&lt;</span>
<div class="r" style="left:117px;top:295px;width:30px;height:30px"></div>
<span class="t" style="left:118.23px;top:297.40px;font-size:10.4px;color:#0d4a4c;-webkit-text-stroke:0.2px #0d4a4c;">&gt;</span>
<div class="r" style="left:146px;top:295px;width:30px;height:30px"></div>
<span class="t" style="left:147.23px;top:297.40px;font-size:10.4px;color:#0d4a4c;-webkit-text-stroke:0.2px #0d4a4c;">&gt;</span>
<div class="r" style="left:81px;top:300px;width:22px;height:24px"></div>
<span class="t" style="left:82.35px;top:301.90px;font-size:10.4px;color:#0d4a4c;font-weight:700;transform:scaleX(1.0129);">X</span>
<div class="r" style="left:176px;top:303px;width:11px;height:13px"></div>
<span class="t" style="left:177.85px;top:304.20px;font-size:10.4px;color:#0d4a4c;font-weight:700;transform:scaleX(1.0129);">X</span>
<div class="r" style="left:77px;top:328px;width:30px;height:12px"></div>
<span class="t" style="left:78.40px;top:328.70px;font-size:10.4px;color:#0d4a4c;font-weight:700;">v</span>
<div class="r" style="left:77px;top:339px;width:30px;height:30px"></div>
<span class="t" style="left:78.40px;top:340.70px;font-size:10.4px;color:#0d4a4c;font-weight:700;">v</span>
<div class="r" style="left:77px;top:368px;width:30px;height:30px"></div>
<span class="t" style="left:78.40px;top:369.60px;font-size:10.4px;color:#0d4a4c;font-weight:700;">v</span>
<div class="r" style="left:130px;top:332px;width:30px;height:12px"></div>
<span class="t" style="left:131.20px;top:333.00px;font-size:10.4px;color:#0d4a4c;font-weight:700;">v</span>
<div class="r" style="left:130px;top:344px;width:30px;height:30px"></div>
<span class="t" style="left:131.20px;top:345.50px;font-size:10.4px;color:#0d4a4c;font-weight:700;">v</span>
<div class="r" style="left:130px;top:374px;width:30px;height:30px"></div>
<span class="t" style="left:131.20px;top:375.50px;font-size:10.4px;color:#0d4a4c;font-weight:700;">v</span>
<div class="r" style="left:7px;top:342px;width:60px;height:55px"></div>
<span class="t" style="left:7.19px;top:344.40px;font-size:10.4px;color:#0d4a4c;font-weight:700;transform:scaleX(1.0437);">Halt</span>
<div class="r" style="left:198px;top:297px;width:74px;height:13px"></div>
<span class="t" style="left:199.34px;top:298.65px;font-size:10.4px;color:#0d4a4c;font-weight:700;transform:scaleX(1.0277);">fixture offset</span>
<div class="r" style="left:206px;top:312px;width:54px;height:15px"></div>
<span class="t" style="left:208.10px;top:312.90px;font-size:10.4px;color:#0d4a4c;font-weight:700;transform:scaleX(1.0349);">1 - G54</span>
<div class="r" style="left:201px;top:330px;width:32px;height:15px"></div>
<span class="t" style="left:203.14px;top:331.65px;font-size:10.4px;color:#0d4a4c;font-weight:700;">edit</span>
<div class="r" style="left:235px;top:330px;width:32px;height:15px"></div>
<span class="t" style="left:237.39px;top:331.65px;font-size:10.4px;color:#0d4a4c;font-weight:700;">set</span>
<div class="r" style="left:180px;top:355px;width:120px;height:210px"></div>
<span class="t" style="left:182.83px;top:357.00px;font-size:10.4px;color:#0d4a4c;-webkit-text-stroke:0.25px #0d4a4c;">STATICF SGROUP</span>
<div class="r" style="left:186px;top:365px;width:15px;height:21px"></div>
<span class="t" style="left:188.17px;top:367.15px;font-size:10.4px;color:#0d4a4c;-webkit-text-stroke:0.3px #0d4a4c;">F</span>
<div class="r" style="left:207px;top:365px;width:31px;height:12px"></div>
<span class="t" style="left:221.17px;top:366.90px;font-size:10.4px;color:#0d4a4c;font-weight:700;transform:scaleX(1.0522);">5.0</span>
<div class="r" style="left:207px;top:379px;width:31px;height:10px"></div>
<span class="t" style="left:221.12px;top:378.90px;font-size:10.4px;color:#0d4a4c;font-weight:700;transform:scaleX(1.0562);">0.0</span>
<div class="r" style="left:244px;top:365px;width:15px;height:21px"></div>
<span class="t" style="left:246.03px;top:367.15px;font-size:10.4px;color:#0d4a4c;-webkit-text-stroke:0.3px #0d4a4c;">S</span>
<div class="r" style="left:262px;top:364px;width:31px;height:12px"></div>
<span class="t" style="left:267.16px;top:366.40px;font-size:10.4px;color:#0d4a4c;font-weight:700;transform:scaleX(1.0313);">1000.0</span>
<div class="r" style="left:262px;top:376px;width:31px;height:11px"></div>
<span class="t" style="left:276.83px;top:377.40px;font-size:10.4px;color:#0d4a4c;font-weight:700;transform:scaleX(1.0052);">0.0</span>
<div class="r" style="left:184px;top:390px;width:28px;height:15px"></div>
<span class="t" style="left:185.98px;top:392.10px;font-size:10.4px;color:#0d4a4c;font-weight:700;">1</span>
<div class="r" style="left:212px;top:390px;width:28px;height:15px"></div>
<div class="cl" style="left:212px;top:392.10px;width:27px;height:14px"><span class="t" style="left:1.04px;top:0;font-size:10.4px;color:#0d4a4c;font-weight:700;">apply</span></div>
<div class="r" style="left:239px;top:390px;width:28px;height:15px"></div>
<span class="t" style="left:240.88px;top:392.10px;font-size:10.4px;color:#0d4a4c;font-weight:700;">1</span>
<div class="r" style="left:267px;top:390px;width:28px;height:15px"></div>
<span class="t" style="left:268.44px;top:392.10px;font-size:10.4px;color:#0d4a4c;font-weight:700;transform:scaleX(0.9932);">apply</span>
<div class="r" style="left:189px;top:406px;width:30px;height:14px"></div>
<span class="t" style="left:189.90px;top:406.60px;font-size:10.4px;color:#0d4a4c;font-weight:700;transform:scaleX(1.0342);">rapid</span>
<div class="r" style="left:222px;top:405px;width:66px;height:15px"></div>
<span class="t" style="left:224.04px;top:406.60px;font-size:10.4px;color:#0d4a4c;font-weight:700;transform:scaleX(1.0302);">feed override</span>
<div class="r" style="left:194px;top:417px;width:17px;height:146px"></div>
<div class="r" style="left:240px;top:417px;width:16px;height:146px"></div>
<div class="cl" style="left:194px;top:418.80px;width:54px;height:14px"><span class="t" style="left:1.02px;top:0;font-size:10.4px;color:#0d4a4c;font-weight:700;">Feed Slider</span></div>
<span class="t" style="left:243.05px;top:418.80px;font-size:10.4px;color:#0d4a4c;font-weight:700;transform:scaleX(0.9673);">Spindle Slider</span>
<div class="r" style="left:216px;top:423px;width:17px;height:10px"></div>
<span class="t" style="left:217.59px;top:423.10px;font-size:10.4px;color:#0d4a4c;font-weight:700;">2.00</span>
<div class="r" style="left:216px;top:433px;width:17px;height:10px"></div>
<span class="t" style="left:217.26px;top:434.10px;font-size:10.4px;color:#0d4a4c;font-weight:700;transform:scaleX(1.0187);">1.50</span>
<div class="r" style="left:216px;top:450px;width:17px;height:10px"></div>
<span class="t" style="left:217.26px;top:451.80px;font-size:10.4px;color:#0d4a4c;font-weight:700;transform:scaleX(1.0187);">1.00</span>
<div class="r" style="left:216px;top:464px;width:17px;height:10px"></div>
<span class="t" style="left:217.54px;top:466.10px;font-size:10.4px;color:#0d4a4c;font-weight:700;">0.75</span>
<div class="r" style="left:216px;top:478px;width:17px;height:10px"></div>
<span class="t" style="left:217.53px;top:480.10px;font-size:10.4px;color:#0d4a4c;font-weight:700;transform:scaleX(1.0051);">0.50</span>
<div class="r" style="left:216px;top:490px;width:17px;height:10px"></div>
<span class="t" style="left:217.53px;top:492.10px;font-size:10.4px;color:#0d4a4c;font-weight:700;transform:scaleX(1.0051);">0.40</span>
<div class="r" style="left:216px;top:502px;width:17px;height:11px"></div>
<span class="t" style="left:217.53px;top:504.10px;font-size:10.4px;color:#0d4a4c;font-weight:700;transform:scaleX(1.0051);">0.30</span>
<div class="r" style="left:216px;top:520px;width:17px;height:10px"></div>
<span class="t" style="left:217.53px;top:522.10px;font-size:10.4px;color:#0d4a4c;font-weight:700;transform:scaleX(1.0051);">0.20</span>
<div class="r" style="left:216px;top:531px;width:17px;height:10px"></div>
<span class="t" style="left:217.54px;top:533.60px;font-size:10.4px;color:#0d4a4c;font-weight:700;">0.15</span>
<div class="r" style="left:216px;top:548px;width:17px;height:10px"></div>
<span class="t" style="left:217.53px;top:550.50px;font-size:10.4px;color:#0d4a4c;font-weight:700;transform:scaleX(1.0051);">0.10</span>
<div class="r" style="left:265px;top:427px;width:31px;height:28px"></div>
<span class="t" style="left:266.14px;top:428.90px;font-size:10.4px;color:#0d4a4c;font-weight:700;">on cw</span>
<div class="r" style="left:265px;top:472px;width:31px;height:28px"></div>
<span class="t" style="left:266.14px;top:473.90px;font-size:10.4px;color:#0d4a4c;font-weight:700;">on ccw</span>
<div class="r" style="left:265px;top:515px;width:31px;height:28px"></div>
<span class="t" style="left:266.13px;top:517.10px;font-size:10.4px;color:#0d4a4c;font-weight:700;transform:scaleX(1.0117);">off</span>
<div class="r" style="left:6px;top:429px;width:30px;height:30px"></div>
<span class="t" style="left:7.03px;top:431.10px;font-size:10.4px;color:#0d4a4c;-webkit-text-stroke:0.2px #0d4a4c;">&lt;</span>
<div class="r" style="left:35px;top:429px;width:30px;height:30px"></div>
<span class="t" style="left:36.03px;top:431.10px;font-size:10.4px;color:#0d4a4c;-webkit-text-stroke:0.2px #0d4a4c;">&lt;</span>
<div class="r" style="left:65px;top:429px;width:11px;height:30px"></div>
<span class="t" style="left:66.03px;top:431.10px;font-size:10.4px;color:#0d4a4c;-webkit-text-stroke:0.2px #0d4a4c;">&lt;</span>
<div class="r" style="left:105px;top:429px;width:12px;height:30px"></div>
<span class="t" style="left:106.03px;top:431.10px;font-size:10.4px;color:#0d4a4c;-webkit-text-stroke:0.2px #0d4a4c;">&lt;</span>
<div class="r" style="left:116px;top:429px;width:30px;height:30px"></div>
<span class="t" style="left:117.03px;top:431.10px;font-size:10.4px;color:#0d4a4c;-webkit-text-stroke:0.2px #0d4a4c;">&gt;</span>
<div class="r" style="left:145px;top:429px;width:30px;height:30px"></div>
<span class="t" style="left:146.03px;top:431.10px;font-size:10.4px;color:#0d4a4c;-webkit-text-stroke:0.2px #0d4a4c;">&gt;</span>
<div class="r" style="left:83px;top:436px;width:12px;height:14px"></div>
<span class="t" style="left:83.77px;top:438.10px;font-size:10.4px;color:#0d4a4c;-webkit-text-stroke:0.3px #0d4a4c;">B</span>
<div class="r" style="left:6px;top:461px;width:30px;height:30px"></div>
<span class="t" style="left:7.03px;top:463.10px;font-size:10.4px;color:#0d4a4c;-webkit-text-stroke:0.2px #0d4a4c;">&lt;</span>
<div class="r" style="left:35px;top:461px;width:30px;height:30px"></div>
<span class="t" style="left:36.03px;top:463.10px;font-size:10.4px;color:#0d4a4c;-webkit-text-stroke:0.2px #0d4a4c;">&lt;</span>
<div class="r" style="left:65px;top:461px;width:11px;height:30px"></div>
<span class="t" style="left:66.03px;top:463.10px;font-size:10.4px;color:#0d4a4c;-webkit-text-stroke:0.2px #0d4a4c;">&lt;</span>
<div class="r" style="left:105px;top:461px;width:12px;height:30px"></div>
<span class="t" style="left:106.03px;top:463.10px;font-size:10.4px;color:#0d4a4c;-webkit-text-stroke:0.2px #0d4a4c;">&lt;</span>
<div class="r" style="left:116px;top:461px;width:30px;height:30px"></div>
<span class="t" style="left:117.03px;top:463.10px;font-size:10.4px;color:#0d4a4c;-webkit-text-stroke:0.2px #0d4a4c;">&gt;</span>
<div class="r" style="left:145px;top:461px;width:30px;height:30px"></div>
<span class="t" style="left:146.03px;top:463.10px;font-size:10.4px;color:#0d4a4c;-webkit-text-stroke:0.2px #0d4a4c;">&gt;</span>
<div class="r" style="left:83px;top:466px;width:12px;height:14px"></div>
<span class="t" style="left:84.08px;top:468.10px;font-size:10.4px;color:#0d4a4c;-webkit-text-stroke:0.3px #0d4a4c;">C</span>
<div class="r" style="left:-13px;top:513px;width:71px;height:55px"></div>
<span class="t" style="left:0.03px;top:515.40px;font-size:10.4px;color:#0d4a4c;font-weight:700;transform:scaleX(0.9881);">Emergency Stop</span>
<div class="r" style="left:90px;top:513px;width:60px;height:55px"></div>
<span class="t" style="left:91.80px;top:515.40px;font-size:10.4px;color:#0d4a4c;font-weight:700;transform:scaleX(1.0361);">Feed Hold</span>
<div class="r" style="left:318px;top:539px;width:345px;height:16px"></div>
<span class="t" style="left:319.07px;top:541.15px;font-size:10.4px;color:#0d4a4c;font-weight:700;transform:scaleX(1.0431);">G0A2</span>
<div class="r" style="left:670px;top:536px;width:28px;height:19px"></div>
<span class="t" style="left:672.04px;top:537.80px;font-size:10.4px;color:#0d4a4c;font-weight:700;transform:scaleX(0.9881);">Send</span>
<div class="r" style="left:680px;top:429px;width:28px;height:19px"></div>
<span class="t" style="left:681.92px;top:431.80px;font-size:10.4px;color:#0d4a4c;font-weight:700;">Help</span>
<div class="r" style="left:677px;top:170px;width:19px;height:11px"></div>
<span class="t" style="left:677.90px;top:171.70px;font-size:10.4px;color:#0d4a4c;font-weight:700;transform:scaleX(1.0324);">File:</span>
<div class="r" style="left:679px;top:186px;width:25px;height:15px"></div>
<span class="t" style="left:679.58px;top:188.40px;font-size:10.4px;color:#0d4a4c;font-weight:700;">1</span>
<div class="r" style="left:679px;top:200px;width:25px;height:13px"></div>
<span class="t" style="left:679.89px;top:202.10px;font-size:10.4px;color:#0d4a4c;font-weight:700;">2</span>
<div class="r" style="left:679px;top:214px;width:25px;height:13px"></div>
<span class="t" style="left:679.99px;top:214.40px;font-size:10.4px;color:#0d4a4c;font-weight:700;">3</span>
<div class="r" style="left:679px;top:226px;width:25px;height:15px"></div>
<span class="t" style="left:680.04px;top:228.40px;font-size:10.4px;color:#0d4a4c;font-weight:700;">4</span>
<div class="r" style="left:679px;top:240px;width:25px;height:14px"></div>
<span class="t" style="left:679.89px;top:242.30px;font-size:10.4px;color:#0d4a4c;font-weight:700;">5</span>
<div class="r" style="left:679px;top:254px;width:25px;height:14px"></div>
<span class="t" style="left:679.84px;top:255.20px;font-size:10.4px;color:#0d4a4c;font-weight:700;">6</span>
<div class="r" style="left:679px;top:267px;width:25px;height:15px"></div>
<span class="t" style="left:679.78px;top:269.40px;font-size:10.4px;color:#0d4a4c;font-weight:700;">7</span>
<div class="r" style="left:672px;top:297px;width:34px;height:11px"></div>
<span class="t" style="left:674.34px;top:298.70px;font-size:10.4px;color:#0d4a4c;font-weight:700;">Simulate</span>
<div class="r" style="left:685px;top:312px;width:13px;height:11px"></div>
<div class="cl" style="left:685px;top:312.60px;width:36px;height:14px"><span class="t" style="left:1.54px;top:0;font-size:10.4px;color:#0d4a4c;font-weight:700;">Simulate</span></div>
<div class="r" style="left:675px;top:327px;width:32px;height:15px"></div>
<span class="t" style="left:676.60px;top:327.60px;font-size:10.4px;color:#0d4a4c;font-weight:700;transform:scaleX(1.0295);">run</span>
<div class="r" style="left:677px;top:359px;width:30px;height:13px"></div>
<span class="t" style="left:677.91px;top:360.60px;font-size:10.4px;color:#0d4a4c;font-weight:700;transform:scaleX(1.0266);">Block</span>
<div class="r" style="left:677px;top:372px;width:30px;height:13px"></div>
<span class="t" style="left:677.90px;top:372.80px;font-size:10.4px;color:#0d4a4c;font-weight:700;transform:scaleX(1.0393);">Delete</span>
<div class="r" style="left:686px;top:388px;width:12px;height:12px"></div>
<div class="cl" style="left:686px;top:389.90px;width:35px;height:14px"><span class="t" style="left:1.02px;top:0;font-size:10.4px;color:#0d4a4c;font-weight:700;">BlockDelete</span></div>
</div>
<div style="left:0;top:0;width:881px;height:1px;background:#8e8e8e;"></div>
<div style="left:0;top:0;width:1px;height:777px;background:#8e8e8e;"></div>
<div style="left:880px;top:0;width:1px;height:777px;background:#8a8a8a;"></div>
<div style="left:0;top:776px;width:881px;height:1px;background:#8a8a8a;"></div>
</div>
</body></html>
